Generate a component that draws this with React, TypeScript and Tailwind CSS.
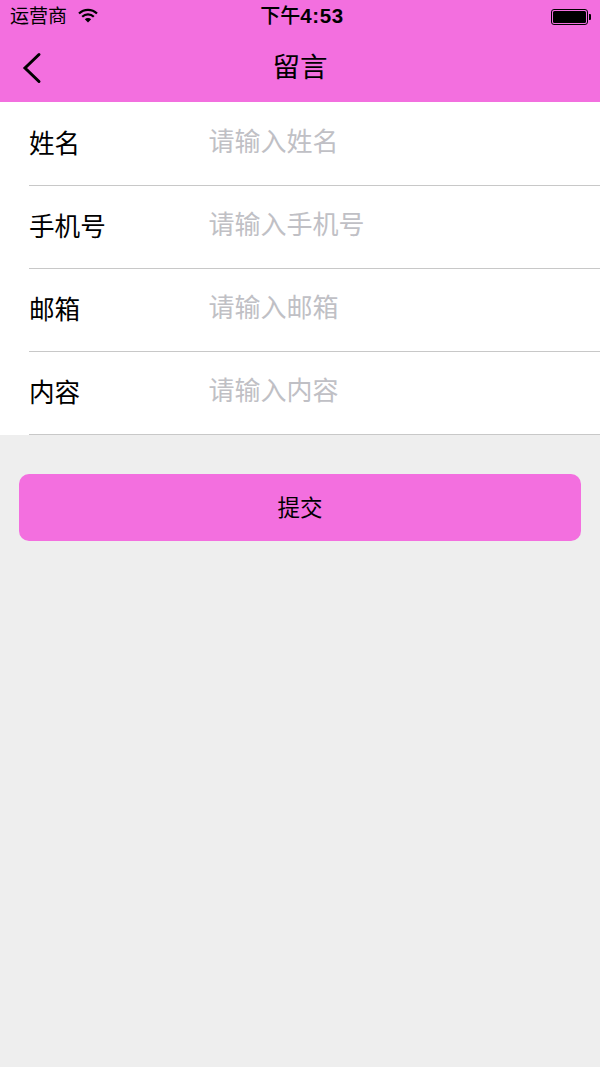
const font = "font-['Liberation_Sans','Noto_Sans_CJK_SC',sans-serif]";

const fields = [
  { label: "姓名", placeholder: "请输入姓名" },
  { label: "手机号", placeholder: "请输入手机号" },
  { label: "邮箱", placeholder: "请输入邮箱" },
  { label: "内容", placeholder: "请输入内容" },
];

const StatusBar = () => (
  <div className="flex h-[34px] items-center justify-between pl-[10px] pr-[9px] text-black">
    <div className="flex w-[200px] items-center gap-[11px]">
      <span className="mb-[2px] text-[19px] leading-none">运营商</span>
      <svg width="20" height="15" viewBox="0 0 20 15" className="mb-[3px]">
        <path d="M1 5.5a12.8 12.8 0 0 1 18 0" fill="none" stroke="#000" strokeWidth="2.2" />
        <path d="M4.2 8.8a8.2 8.2 0 0 1 11.6 0" fill="none" stroke="#000" strokeWidth="2.2" />
        <path d="M10 14.5 6.8 11.3a4.6 4.6 0 0 1 6.4 0z" fill="#000" />
      </svg>
    </div>
    <span className="mb-[1px] ml-[3px] text-[20px] font-medium leading-none">
      下午<span className="text-[20.5px] font-bold tracking-[0.6px]">4:53</span>
    </span>
    <div className="flex w-[200px] items-center justify-end">
      <div className="h-[16px] w-[37px] rounded-[3px] border border-black p-[1px]">
        <div className="h-full w-full rounded-[1.5px] bg-black" />
      </div>
      <div className="ml-[1px] h-[6px] w-[2px] rounded-r-[1px] bg-black" />
    </div>
  </div>
);

export default function App() {
  return (
    <div className={`flex min-h-[1067px] flex-col bg-[#eeeeee] ${font}`}>
      <header className="bg-[#f36fdf]">
        <StatusBar />
        <div className="flex h-[68px] items-center justify-between pl-[22px] pr-[22px]">
          <svg width="20" height="32" viewBox="0 0 20 32">
            <path d="M17 2.5 3 16l14 13.5" fill="none" stroke="#000" strokeWidth="3" strokeLinecap="round" />
          </svg>
          <h1 className="text-[27.5px] font-normal leading-none text-black">留言</h1>
          <div className="w-[20px]" />
        </div>
      </header>

      <div className="bg-white pt-[1px]">
        {fields.map((f) => (
          <div key={f.label} className="ml-[29px] flex h-[83px] border-b border-[#c8c8c8]">
            <span className="w-[179.5px] pt-[24px] text-[25.6px] leading-[34px] text-black">{f.label}</span>
            <span className="pt-[22px] text-[26px] leading-[34px] text-[#c0c0c5]">{f.placeholder}</span>
          </div>
        ))}
      </div>

      <button className="mx-[19px] mt-[39px] h-[67px] rounded-[10px] bg-[#f36fdf] pt-[2px] text-[22.5px] text-black">
        提交
      </button>
    </div>
  );
}
